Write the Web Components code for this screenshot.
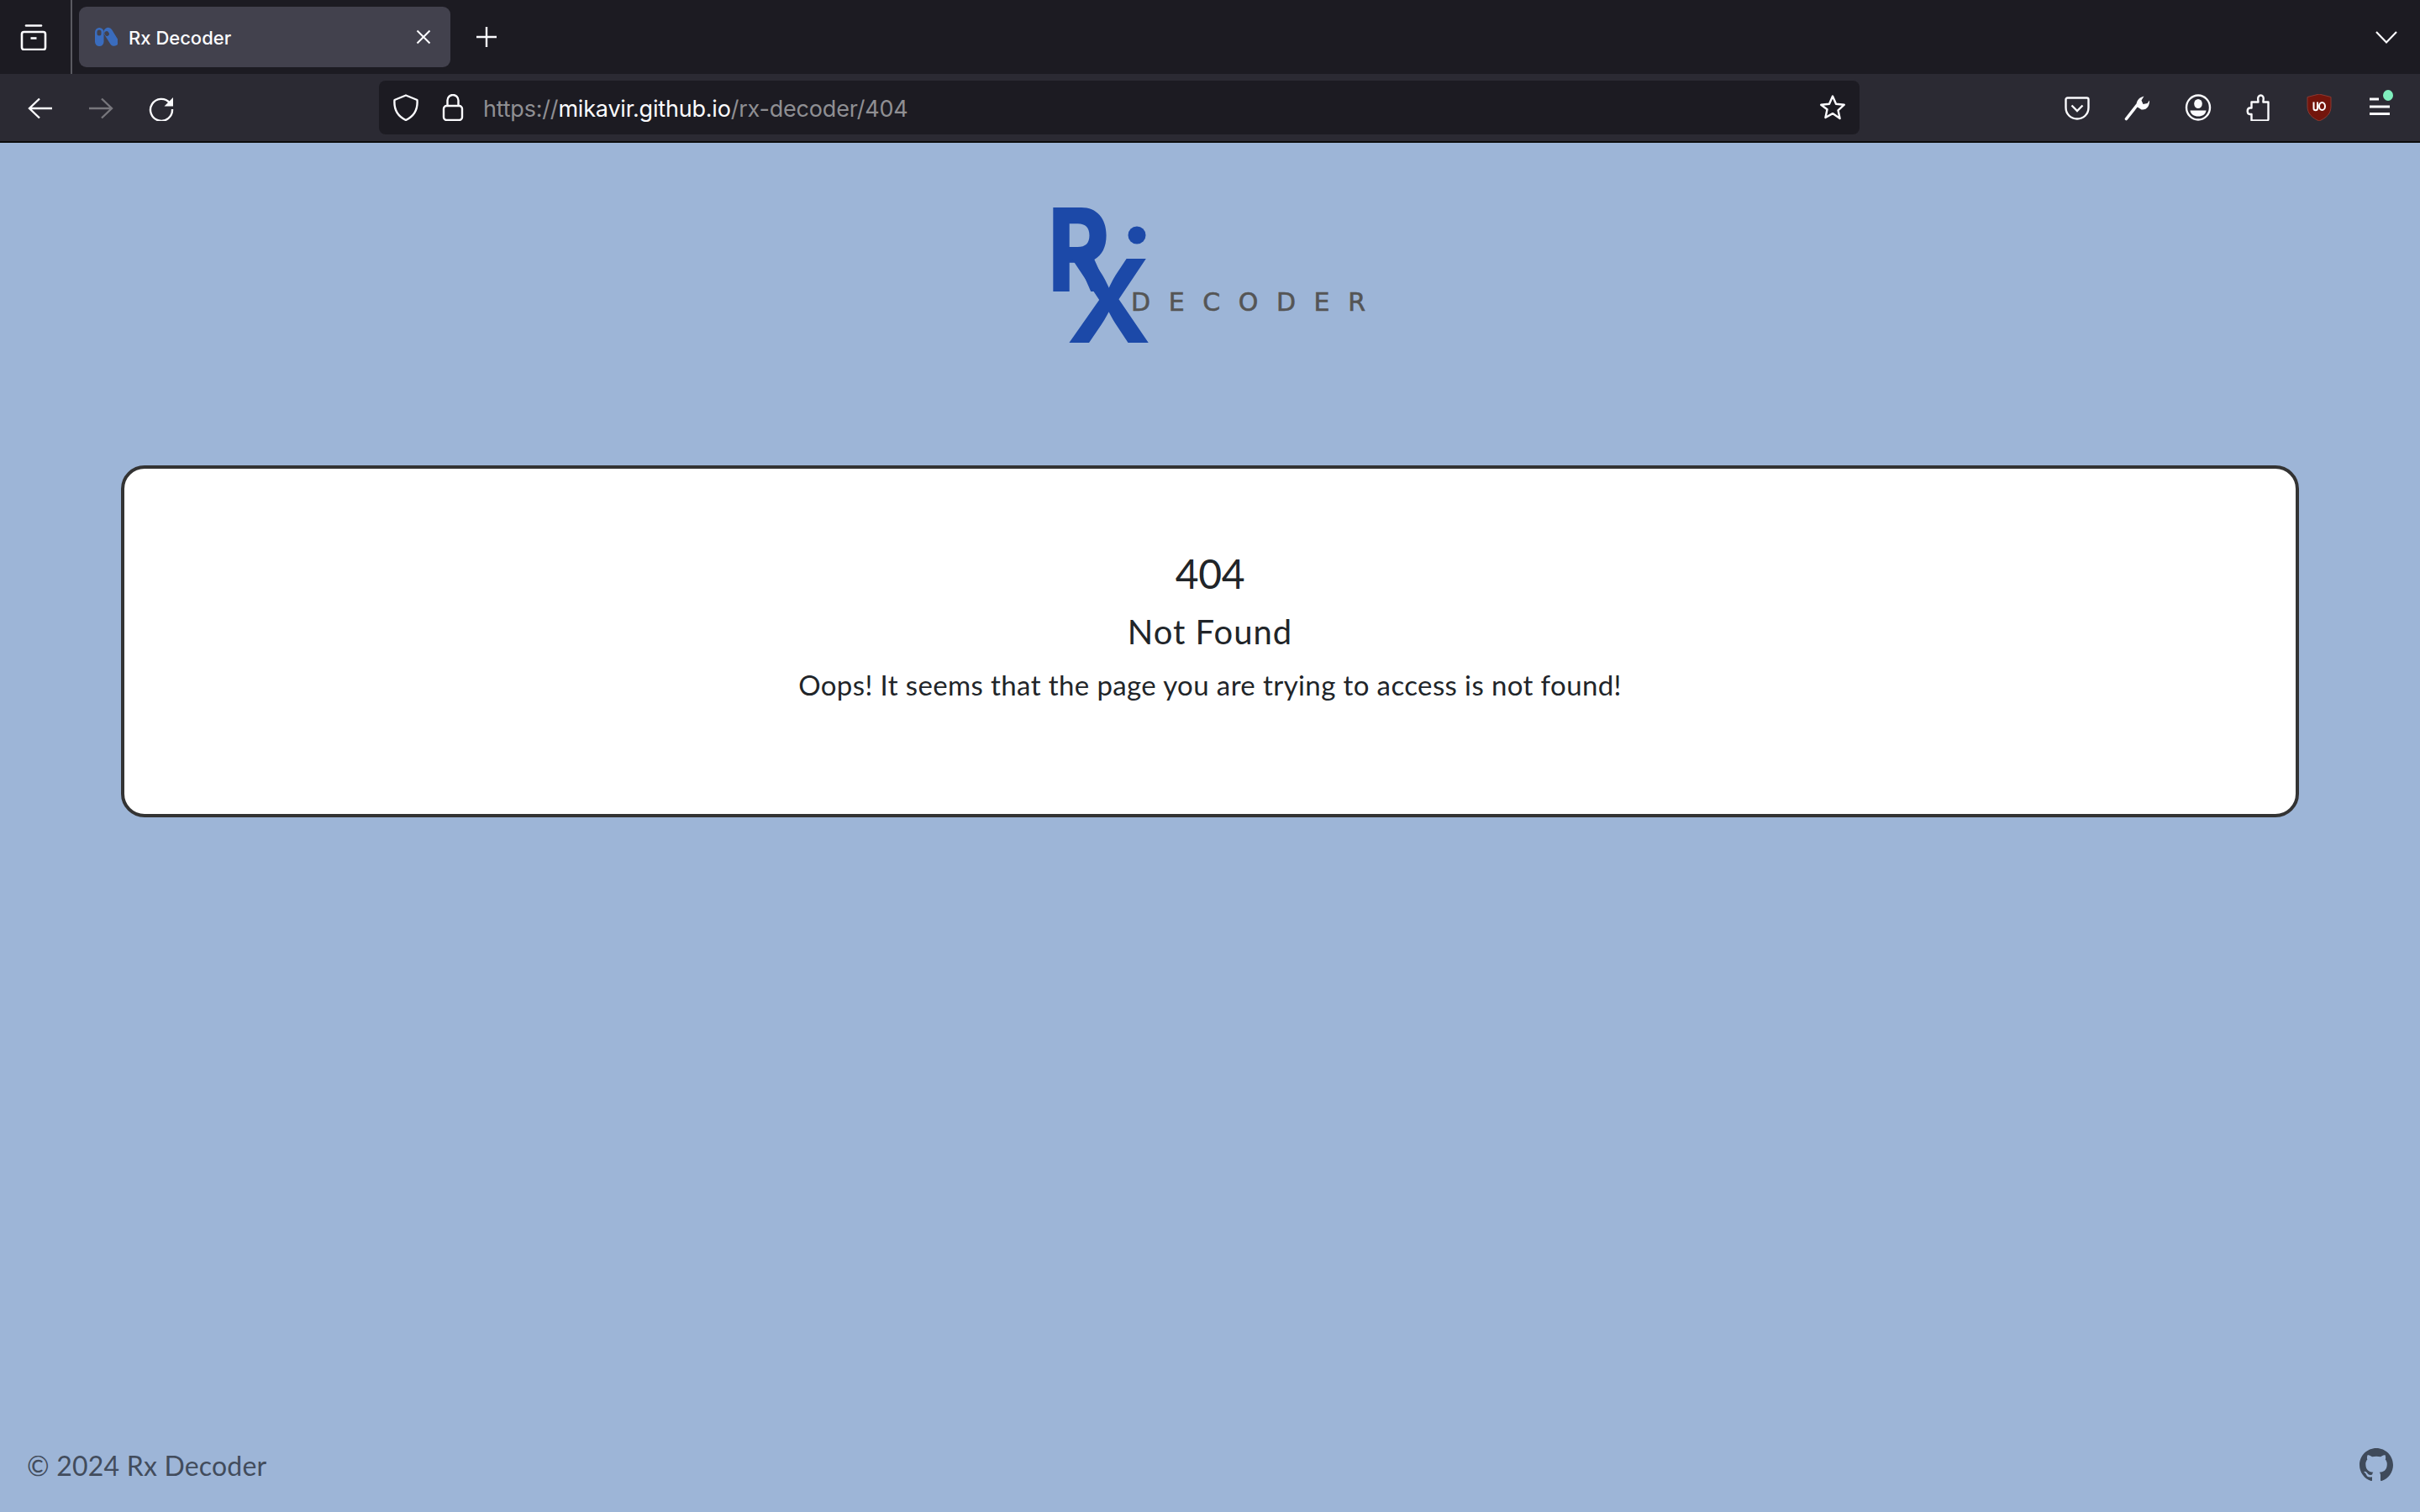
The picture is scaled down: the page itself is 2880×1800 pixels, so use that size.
<!DOCTYPE html>
<html lang="en">
<head>
<meta charset="utf-8">
<title>Rx Decoder</title>
<style>
  html, body { margin: 0; padding: 0; }
  body {
    width: 2880px;
    height: 1800px;
    overflow: hidden;
    display: flex;
    flex-direction: column;
    background: #9db5d7;
  }
  rx-page { flex: 1; }
</style>
</head>
<body>
  <fx-tabstrip title-text="Rx Decoder"></fx-tabstrip>
  <fx-navbar></fx-navbar>
  <rx-page>
    <rx-logo></rx-logo>
    <rx-card>
      <h1 slot="code">404</h1>
      <span slot="title">Not Found</span>
      <span slot="message">Oops! It seems that the page you are trying to access is not found!</span>
    </rx-card>
    <rx-footer slot="footer">© 2024 Rx Decoder</rx-footer>
  </rx-page>

<script>
// icons all in a 32x32 box, one place so the bars can share them
const ICONS = {
  view: `<path d="M7 2.5h18" stroke-width="2.6" stroke-linecap="round"/><rect x="2" y="10" width="28" height="21" rx="2.5" stroke-width="2.6"/><path d="M12.5 17.5h7" stroke-width="2.6"/>`,
  close: `<path d="M8.5 8.5l15 15M23.5 8.5l-15 15" stroke-width="2"/>`,
  plus: `<path d="M16 4v24M4 16h24" stroke-width="2.4"/>`,
  chevron: `<path d="M4 10l12 12.5L28 10" stroke-width="2.2"/>`,
  back: `<path d="M30 17H3M15 5.500L3 17l12 11.500" stroke-width="2.4"/>`,
  forward: `<path d="M2 17h27M17 5.500L29 17 17 28.500" stroke-width="2.4"/>`,
  reload: `<path d="M26 10.500A13 13 0 1 0 29 18" stroke-width="2.4"/><path d="M30 4v10.500H19.500z" fill="currentColor" stroke="none"/>`,
  shield: `<path d="M16 1.500L29.500 7c.8 10-3 19-13.500 24C5.500 26 1.700 17 2.500 7z" stroke-width="2.400" stroke-linejoin="round"/>`,
  lock: `<rect x="5" y="14" width="22" height="17" rx="3.500" stroke-width="2.400"/><path d="M9.500 14V7.500a6.500 6.500 0 0 1 13 0V14" stroke-width="2.400"/>`,
  star: `<path d="M16 2.500l4 9.200 9.800 1-7.300 6.600 2.100 9.700L16 23.100 7.400 28l2.100-9.700L2.200 12.700l9.800-1z" stroke-width="2.400" stroke-linejoin="round"/>`,
  pocket: `<path d="M4.500 4.500h23a2 2 0 0 1 2 2V16c0 8-6 13.500-13.500 13.500S2.500 24 2.500 16V6.500a2 2 0 0 1 2-2z" stroke-width="2.400"/><path d="M9.500 13.500L16 20l6.500-6.500" stroke-width="2.400"/>`,
  wrench: `<path d="M2.500 29.500L15 13.500" stroke-width="3.600" stroke-linecap="round"/><path d="M15 15c-1.500-5 1-10.500 8.500-12.500l-3 5 2 4.500 5-1 2.500-3.500c.5 6-3 12-9.500 11z" fill="currentColor" stroke="none"/>`,
  account: `<ellipse cx="16" cy="16" rx="14" ry="14.500" stroke-width="2.400"/><ellipse cx="16" cy="11.500" rx="4.800" ry="5.500" fill="currentColor" stroke="none"/><path d="M6.500 19.500h19c-.5 4.500-4.500 7-9.500 7s-9-2.500-9.500-7z" fill="currentColor" stroke="none"/>`,
  puzzle: `<path d="M18.500 1.500c2 0 3.500 1.800 3.200 4.500-.1 1.200-.3 2-.3 3.500h6.100v20.500a1.500 1.500 0 0 1-1.500 1.500H7.500V24H5.500c-1.500 0-2.800-.6-2.800-3.700S4 16.500 5.500 16.500h2V9.500h8c0-1.500-.3-2.300-.3-3.500-.2-2.700 1.300-4.500 3.300-4.500z" stroke-width="2.400" stroke-linejoin="round"/>`,
  menu: `<path d="M4 6h11M4 15h24M4 23.500h24" stroke-width="2.800"/>`
};

function icon(name, color) {
  return `<svg width="32" height="32" viewBox="0 0 32 32" fill="none" stroke="currentColor" style="display:block;flex:none;color:${color || "#fbfbfe"}">${ICONS[name]}</svg>`;
}

class FxTabstrip extends HTMLElement {
  constructor() {
    super();
    this.attachShadow({ mode: "open" });
    this.shadowRoot.innerHTML = `
      <style>
        :host {
          display: flex;
          align-items: center;
          height: 88px;
          background: #1c1b22;
          padding: 0 24px;
          box-sizing: border-box;
        }
        .sep { width: 2px; height: 88px; background: #5a5a61; margin-left: 28px; }
        .tab {
          width: 442px;
          height: 72px;
          margin-left: 8px;
          background: #42414d;
          border-radius: 9px;
          display: flex;
          align-items: center;
          box-sizing: border-box;
          padding: 0 16px 0 18px;
          color: #fbfbfe;
          font: 500 22px "Inter", "Liberation Sans", sans-serif;
        }
        .favicon { display: block; flex: none; margin-right: 13px; }
        .name { flex: 1; padding-top: 2px; }
        .plus { margin-left: 27px; }
        .list { margin-left: auto; }
      </style>
      <div>${icon("view")}</div>
      <div class="sep"></div>
      <div class="tab">
        <svg class="favicon" width="28" height="24" viewBox="0 0 28 24">
          <rect x="1" y="1" width="10.500" height="22" rx="5.200" fill="#3a6cbd"/>
          <rect x="3.500" y="3.500" width="5" height="7" rx="2.500" fill="#42414d"/>
          <rect x="15" y="0" width="10.500" height="24" rx="5.200" fill="#3a6cbd" transform="rotate(-32 20 12)"/>
          <rect x="15.500" y="3" width="5" height="6" rx="2.500" fill="#42414d" transform="rotate(-32 20 12)"/>
        </svg>
        <span class="name">${this.getAttribute("title-text") || ""}</span>
        ${icon("close")}
      </div>
      <div class="plus">${icon("plus")}</div>
      <div class="list">${icon("chevron")}</div>
    `;
  }
}

class FxUrlbar extends HTMLElement {
  constructor() {
    super();
    this.attachShadow({ mode: "open" });
    this.shadowRoot.innerHTML = `
      <style>
        :host {
          display: flex;
          align-items: center;
          width: 1762px;
          height: 64px;
          margin-left: 243px;
          background: #1c1b22;
          border-radius: 8px;
          box-sizing: border-box;
          padding: 0 16px;
          font: 400 27px "Inter", "Liberation Sans", sans-serif;
          color: #8f8f93;
          letter-spacing: -0.2px;
        }
        .lock { margin-left: 24px; margin-right: 20px; }
        .url { flex: 1; white-space: pre; padding-top: 2px; }
        .host { color: #fbfbfe; }
      </style>
      ${icon("shield")}
      <div class="lock">${icon("lock")}</div>
      <span class="url">https://<span class="host">mikavir.github.io</span>/rx-decoder/404</span>
      ${icon("star")}
    `;
  }
}

class FxNavbar extends HTMLElement {
  constructor() {
    super();
    this.attachShadow({ mode: "open" });
    this.shadowRoot.innerHTML = `
      <style>
        :host {
          display: flex;
          align-items: center;
          height: 82px;
          padding: 0 32px;
          box-sizing: border-box;
          background: #2b2a33;
          border-bottom: 2px solid #0c0c0d;
        }
        .group { display: flex; align-items: center; gap: 40px; }
        .right { margin-left: auto; }
        .menu { position: relative; width: 32px; height: 32px; }
        .dot {
          position: absolute;
          top: -5px;
          right: 0;
          width: 12px;
          height: 13px;
          border-radius: 50%;
          background: #7fefbd;
        }
      </style>
      <div class="group">
        ${icon("back")}
        ${icon("forward", "#77767c")}
        ${icon("reload")}
      </div>
      <fx-urlbar></fx-urlbar>
      <div class="group right">
        ${icon("pocket")}
        ${icon("wrench")}
        ${icon("account")}
        ${icon("puzzle")}
        <svg width="32" height="32" viewBox="0 0 32 32" style="display:block;flex:none">
          <path d="M16 0l14 3.500V15c0 8-5.500 13.500-14 17C7.500 28.500 2 23 2 15V3.500z" fill="#73150c" stroke="#8a3a33" stroke-width="1"/>
          <path d="M9.500 9.500v7.500c0 3 4.500 3 4.500 0V9.500" fill="none" stroke="#fff" stroke-width="2"/>
          <ellipse cx="19.500" cy="14.500" rx="3.500" ry="4.500" fill="none" stroke="#fff" stroke-width="2"/>
        </svg>
        <div class="menu">${icon("menu")}<div class="dot"></div></div>
      </div>
    `;
  }
}

class RxLogo extends HTMLElement {
  constructor() {
    super();
    this.attachShadow({ mode: "open" });
    this.shadowRoot.innerHTML = `
      <style>
        :host { display: flex; justify-content: center; padding-top: 18px; height: 384px; box-sizing: border-box; }
        svg { display: block; }
      </style>
      <svg width="400" height="300" viewBox="0 0 400 300">
        <text transform="translate(7 159) scale(.82 1)" font-family="Inter, 'Liberation Sans', sans-serif" font-weight="800" font-size="137" fill="#1c49a8">R</text>
        <text x="29" y="220" font-family="Inter, 'Liberation Sans', sans-serif" font-weight="700" font-size="137" fill="#1c49a8">X</text>
        <circle cx="113" cy="92" r="10.500" fill="#1c49a8"/>
        <text x="106" y="182" textLength="279" lengthAdjust="spacing" font-family="'DejaVu Sans', sans-serif" font-weight="400" font-size="30" fill="#555555" stroke="#555555" stroke-width=".6">DECODER</text>
      </svg>
    `;
  }
}

class RxCard extends HTMLElement {
  constructor() {
    super();
    this.attachShadow({ mode: "open" });
    this.shadowRoot.innerHTML = `
      <style>
        :host {
          display: flex;
          flex-direction: column;
          align-items: center;
          width: 2592px;
          height: 419px;
          margin: 0 auto;
          box-sizing: border-box;
          padding-top: 95px;
          background: #fff;
          border: 4px solid #333;
          border-radius: 28px;
          color: #212529;
          font-family: "Lato", "Open Sans", sans-serif;
        }
        ::slotted([slot="code"]) { margin: 0; font-size: 48px; font-weight: 400; line-height: 60px; letter-spacing: -0.3px; }
        ::slotted([slot="title"]) { display: block; margin-top: 15px; font-size: 40px; font-weight: 400; line-height: 48px; letter-spacing: 1px; }
        ::slotted([slot="message"]) { display: block; margin-top: 19px; font-size: 33px; font-weight: 400; line-height: 40px; letter-spacing: 0.39px; }
      </style>
      <slot name="code"></slot>
      <slot name="title"></slot>
      <slot name="message"></slot>
    `;
  }
}

class RxFooter extends HTMLElement {
  constructor() {
    super();
    this.attachShadow({ mode: "open" });
    this.shadowRoot.innerHTML = `
      <style>
        :host {
          display: flex;
          justify-content: space-between;
          align-items: center;
          height: 112px;
          padding: 0 32px;
          box-sizing: border-box;
          color: #424c5c;
          font: 400 32px "Lato", "Open Sans", sans-serif;
          letter-spacing: 0.2px;
        }
        svg { display: block; fill: #3f4a5a; }
      </style>
      <span><slot></slot></span>
      <svg width="40" height="40" viewBox="0 0 16 16"><path d="M8 0C3.58 0 0 3.58 0 8c0 3.54 2.29 6.53 5.47 7.59.4.07.55-.17.55-.38 0-.19-.01-.82-.01-1.49-2.01.37-2.53-.49-2.69-.94-.09-.23-.48-.94-.82-1.13-.28-.15-.68-.52-.01-.53.63-.01 1.08.58 1.23.82.72 1.21 1.87.87 2.33.66.07-.52.28-.87.51-1.07-1.78-.2-3.64-.89-3.64-3.95 0-.87.31-1.59.82-2.15-.08-.2-.36-1.02.08-2.12 0 0 .67-.21 2.2.82.64-.18 1.32-.27 2-.27.68 0 1.36.09 2 .27 1.53-1.04 2.2-.82 2.2-.82.44 1.1.16 1.92.08 2.12.51.56.82 1.27.82 2.15 0 3.07-1.87 3.75-3.65 3.95.29.25.54.73.54 1.48 0 1.07-.01 1.93-.01 2.2 0 .21.15.46.55.38A8.013 8.013 0 0016 8c0-4.42-3.58-8-8-8z"/></svg>
    `;
  }
}

class RxPage extends HTMLElement {
  constructor() {
    super();
    this.attachShadow({ mode: "open" });
    this.shadowRoot.innerHTML = `
      <style>
        :host { display: flex; flex-direction: column; min-height: 0; }
        .grow { flex: 1; }
      </style>
      <slot></slot>
      <div class="grow"></div>
      <slot name="footer"></slot>
    `;
  }
}

customElements.define("fx-tabstrip", FxTabstrip);
customElements.define("fx-urlbar", FxUrlbar);
customElements.define("fx-navbar", FxNavbar);
customElements.define("rx-logo", RxLogo);
customElements.define("rx-card", RxCard);
customElements.define("rx-footer", RxFooter);
customElements.define("rx-page", RxPage);
</script>
</body>
</html>
